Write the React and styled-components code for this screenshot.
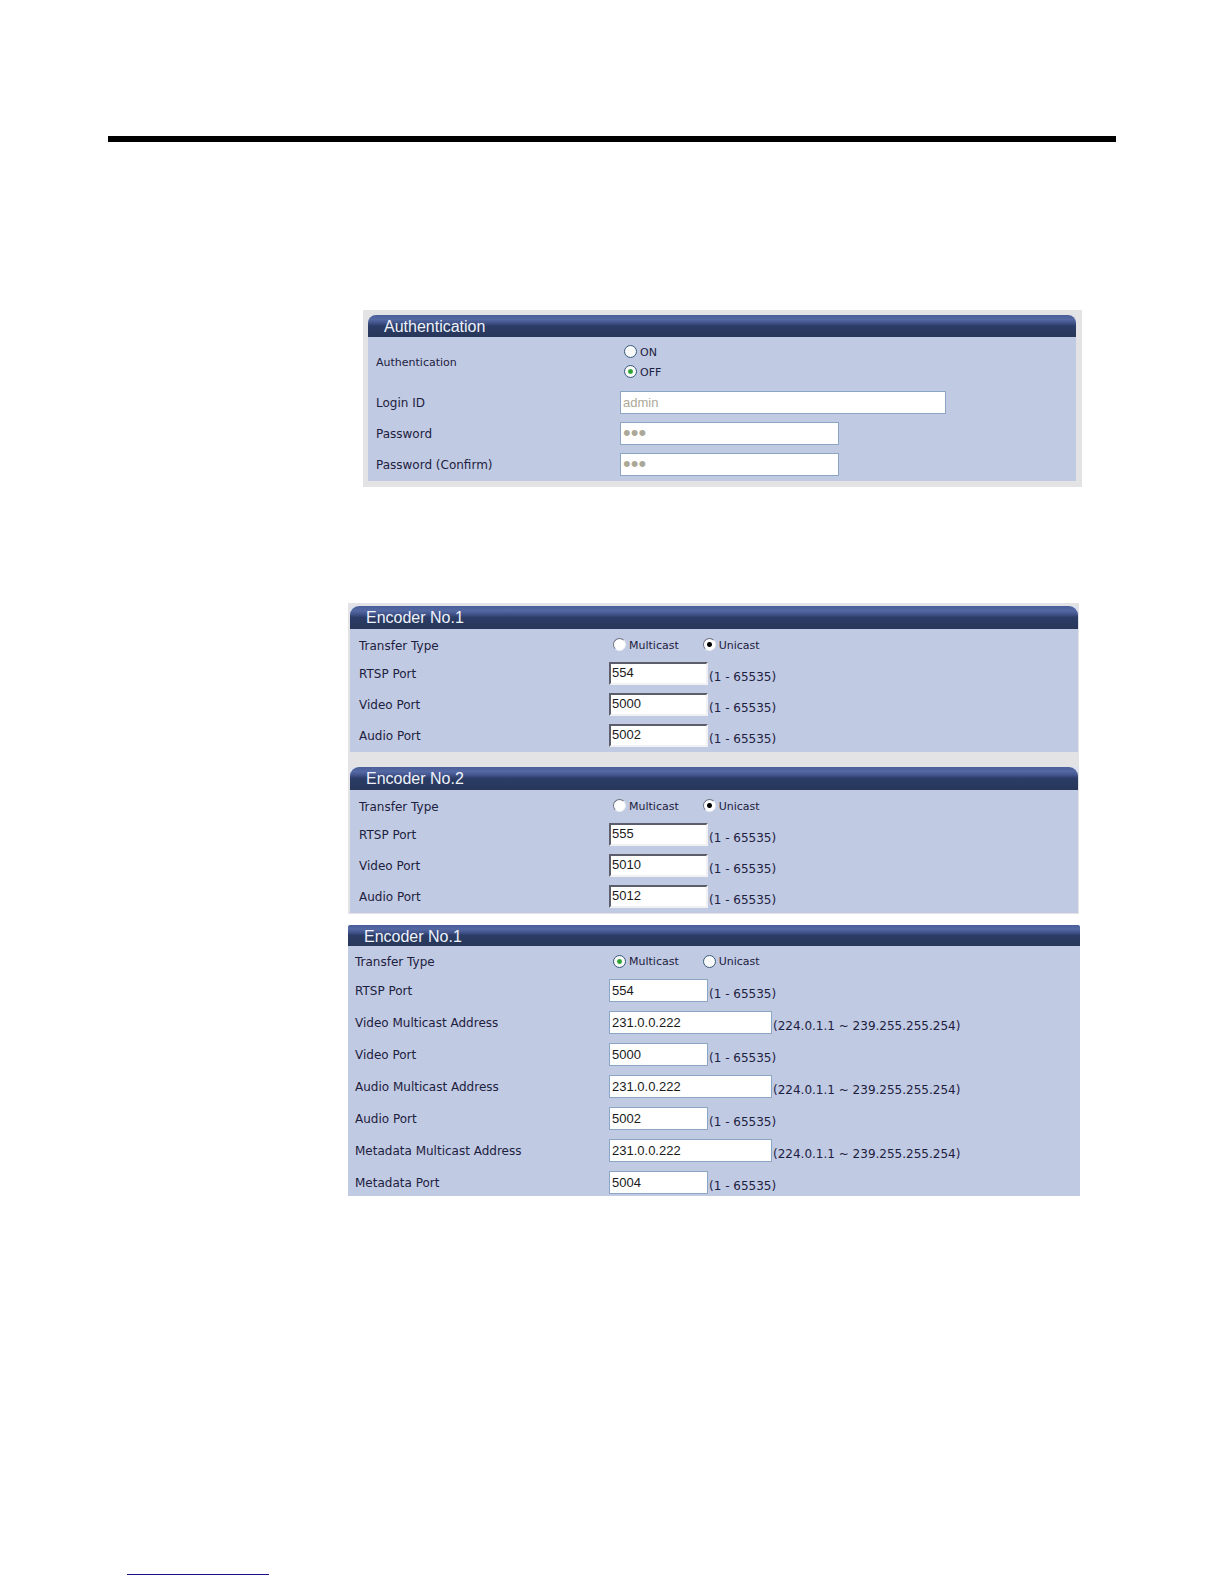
import { useState } from "react";
import styled, { createGlobalStyle, css } from "styled-components";

const GlobalStyle = createGlobalStyle`
  * {
    box-sizing: border-box;
  }

  body {
    margin: 0;
    background: #fff;
    color: #1d2140;
    font-family: "DejaVu Sans", Verdana, sans-serif;
    font-size: 12px;
  }
`

const StyledPage = styled.main`
  display: flex;
  flex-direction: column;
  padding: 136px 108px 8px;
`

const StyledRule = styled.hr`
  width: 100%;
  height: 6px;
  margin: 0 0 168px;
  border: 0;
  background: #000;
`

const StyledFigure = styled.section`
  display: flex;
  flex-direction: column;
  gap: 15px;
  background: #e3e3e6;
  ${({ $variant }) => figureVariants[$variant]}
`

const figureVariants = {
  authentication: css`
    margin: 0 34px 116px 255px;
    padding: 5px 6px 6px 5px;
  `,
  unicast: css`
    margin: 0 37px 11px 240px;
    padding: 3px 1px 1px 2px;
  `,
  multicast: css`
    margin: 0 36px 0 240px;
  `,
}

const StyledPanel = styled.form`
  margin: 0;
  background: #c1cae3;
`

const StyledPanelCorner = styled.div`
  background: ${({ $color }) => $color};
`

const StyledPanelTitle = styled.h2`
  height: ${({ $height }) => $height}px;
  margin: 0;
  padding-left: 16px;
  border-radius: ${({ $radius }) => $radius}px ${({ $radius }) => $radius}px 0 0;
  background: linear-gradient(#495f99 0, #5468a3 20%, #41538a 36%, #2b3c66 50%, #283759 100%);
  color: #eef2fb;
  font-family: "Liberation Sans", Arial, sans-serif;
  font-size: 16px;
  font-weight: 400;
  line-height: 23px;
`

const StyledPanelBody = styled.div`
  display: flex;
  flex-direction: column;
  gap: ${({ $gap }) => $gap}px;
  padding: ${({ $padding }) => $padding};
`

const StyledRow = styled.div`
  display: grid;
  grid-template-columns: ${({ $column }) => $column}px 1fr;
  align-items: center;
  height: ${({ $height }) => $height}px;
`

const StyledLabel = styled.label`
  padding-top: 2px;
  font-size: ${({ $small }) => ($small ? 11 : 12)}px;
  line-height: 16px;
`

const StyledControl = styled.div`
  display: flex;
  align-items: flex-end;
`

const StyledInput = styled.input`
  width: ${({ $width }) => $width}px;
  height: 23px;
  padding: 0 2px;
  border: 1px solid #8ba5c4;
  border-radius: 0;
  background: #fff;
  color: #1a1a1a;
  font-family: "Liberation Sans", Arial, sans-serif;
  font-size: 13px;
  outline: none;

  &:disabled {
    color: #aca899;
  }

  &[type="password"] {
    font-size: 22px;
  }

  ${({ $classic }) => $classic && css`
    padding: 0 1px 2px;
    border: 2px solid;
    border-color: #5c5f6b #f1f1f4 #f1f1f4 #5c5f6b;
  `}
`

const StyledHint = styled.span`
  padding-left: 1px;
  line-height: 16px;
  white-space: nowrap;
`

const StyledRadioGroup = styled.div`
  display: flex;
  flex-direction: ${({ $vertical }) => ($vertical ? "column" : "row")};
  gap: ${({ $vertical }) => ($vertical ? 4 : 24)}px;
  padding-left: 4px;
`

const StyledRadioLabel = styled.label`
  display: flex;
  align-items: center;
  gap: 3px;
  font-size: 11px;
  line-height: 16px;
`

const StyledRadioText = styled.span`
  padding-top: 2px;
  line-height: 14px;
`

const StyledRadio = styled.input`
  appearance: none;
  width: 13px;
  height: 13px;
  margin: 0;
  border: 1px solid #39597c;
  border-radius: 50%;
  background: #f8fafa;

  &:checked {
    background: radial-gradient(circle, #23962a 0, #3fae42 2px, #f8fafa 3px);
  }

  ${({ $classic }) => $classic && css`
    border-color: #6d7080 #eceef4 #eceef4 #6d7080;
    background: #fff;

    &:checked {
      background: radial-gradient(circle, #000 0, #000 2px, #fff 3px);
    }
  `}
`

const StyledFooterLink = styled.a`
  width: 142px;
  height: 16px;
  margin: 363px 0 0 19px;
  border-bottom: 1px solid #1c0f86;
`

const layouts = {
  authentication: { title: 22, radius: 8, corner: "#e3e3e6", gap: 3, padding: "1px 8px 3px", first: 47, column: 244 },
  unicast: { title: 23, radius: 9, corner: "#dbe1ee", gap: 3, padding: "4px 9px 3px", first: 23, column: 250, classic: true },
  multicast: { title: 21, radius: 2, corner: "#fff", gap: 4, padding: "4px 7px 0", first: 22, column: 254 },
}

const PORT_RANGE = "(1 - 65535)"
const ADDRESS_RANGE = "(224.0.1.1 ~ 239.255.255.254)"

const port = (label, value) => ({ label, value, width: 99, hint: PORT_RANGE })
const address = (label, value) => ({ label, value, width: 163, hint: ADDRESS_RANGE })

const panels = {
  authentication: [
    {
      id: "auth",
      title: "Authentication",
      radio: { label: "Authentication", options: ["ON", "OFF"], selected: "OFF", vertical: true },
      fields: [
        { label: "Login ID", value: "admin", width: 326, disabled: true },
        { label: "Password", value: "abc", type: "password", width: 219, disabled: true },
        { label: "Password (Confirm)", value: "abc", type: "password", width: 219, disabled: true },
      ],
    },
  ],
  unicast: [
    {
      id: "unicast1",
      title: "Encoder No.1",
      radio: { label: "Transfer Type", options: ["Multicast", "Unicast"], selected: "Unicast" },
      fields: [port("RTSP Port", "554"), port("Video Port", "5000"), port("Audio Port", "5002")],
    },
    {
      id: "unicast2",
      title: "Encoder No.2",
      radio: { label: "Transfer Type", options: ["Multicast", "Unicast"], selected: "Unicast" },
      fields: [port("RTSP Port", "555"), port("Video Port", "5010"), port("Audio Port", "5012")],
    },
  ],
  multicast: [
    {
      id: "multicast1",
      title: "Encoder No.1",
      radio: { label: "Transfer Type", options: ["Multicast", "Unicast"], selected: "Multicast" },
      fields: [
        port("RTSP Port", "554"),
        address("Video Multicast Address", "231.0.0.222"),
        port("Video Port", "5000"),
        address("Audio Multicast Address", "231.0.0.222"),
        port("Audio Port", "5002"),
        address("Metadata Multicast Address", "231.0.0.222"),
        port("Metadata Port", "5004"),
      ],
    },
  ],
}

function RadioRow({ id, radio, layout }) {
    const [selected, setSelected] = useState(radio.selected)

    return (
        <StyledRow $column={layout.column} $height={layout.first}>
            <StyledLabel as="span" id={`${id}-type`} $small={radio.vertical}>{radio.label}</StyledLabel>
            <StyledRadioGroup role="radiogroup" aria-labelledby={`${id}-type`} $vertical={radio.vertical}>
                {radio.options.map((option) => (
                    <StyledRadioLabel key={option}>
                        <StyledRadio
                            type="radio"
                            name={`${id}-type`}
                            checked={selected === option}
                            onChange={() => setSelected(option)}
                            $classic={layout.classic}
                        />
                        <StyledRadioText>{option}</StyledRadioText>
                    </StyledRadioLabel>
                ))}
            </StyledRadioGroup>
        </StyledRow>
    )
}

function FieldRow({ id, field, layout }) {
    return (
        <StyledRow $column={layout.column} $height={28}>
            <StyledLabel htmlFor={id}>{field.label}</StyledLabel>
            <StyledControl>
                <StyledInput
                    id={id}
                    type={field.type || "text"}
                    defaultValue={field.value}
                    disabled={field.disabled}
                    autoComplete="off"
                    $width={field.width}
                    $classic={layout.classic}
                />
                {field.hint && <StyledHint>{field.hint}</StyledHint>}
            </StyledControl>
        </StyledRow>
    )
}

function Panel({ panel, layout }) {
    return (
        <StyledPanel>
            <StyledPanelCorner $color={layout.corner}>
                <StyledPanelTitle $height={layout.title} $radius={layout.radius}>{panel.title}</StyledPanelTitle>
            </StyledPanelCorner>
            <StyledPanelBody $gap={layout.gap} $padding={layout.padding}>
                <RadioRow id={panel.id} radio={panel.radio} layout={layout} />
                {panel.fields.map((field, i) => (
                    <FieldRow key={field.label} id={`${panel.id}-${i}`} field={field} layout={layout} />
                ))}
            </StyledPanelBody>
        </StyledPanel>
    )
}

export default function App() {
    return (
        <StyledPage>
            <GlobalStyle />
            <StyledRule />
            {Object.keys(panels).map((variant) => (
                <StyledFigure key={variant} $variant={variant}>
                    {panels[variant].map((panel) => (
                        <Panel key={panel.id} panel={panel} layout={layouts[variant]} />
                    ))}
                </StyledFigure>
            ))}
            <StyledFooterLink href="#contents" aria-label="Contents" />
        </StyledPage>
    )
}
